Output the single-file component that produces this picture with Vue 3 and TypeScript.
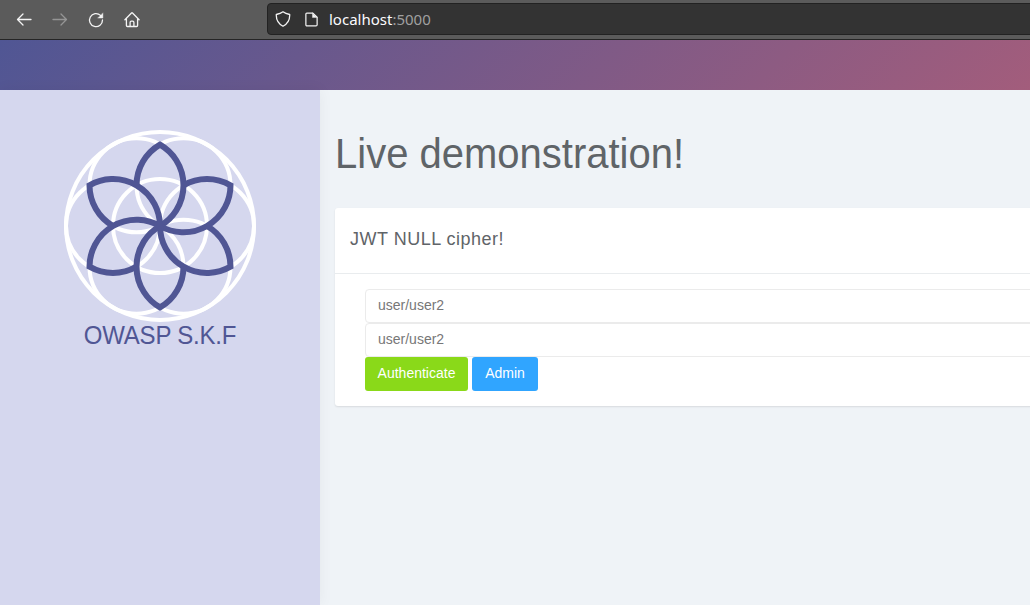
<script setup lang="ts">
import { ref } from 'vue'

const username = ref('')
const password = ref('')
const angles: number[] = [0, 60, 120, 180, 240, 300]
const ring = [
  [47, 0],
  [23.5, 40.7],
  [-23.5, 40.7],
  [-47, 0],
  [-23.5, -40.7],
  [23.5, -40.7],
]
</script>

<template>
  <div class="window">
    <header class="toolbar">
      <nav class="nav">
        <svg class="icon" viewBox="0 0 16 16"><path d="M15 7.500H1.500M7 2 1.500 7.500l5.500 5.500" /></svg>
        <svg class="icon dim" viewBox="0 0 16 16"><path d="M1 7.500h13.500M9 2l5.500 5.500-5.500 5.500" /></svg>
        <svg class="icon" viewBox="0 0 16 16">
          <path d="M12.500 3.400A6.500 6.500 0 1 0 14.500 8" />
          <path class="solid" d="M14.900 1.200v4.900H10z" />
        </svg>
        <svg class="icon home" viewBox="0 0 16 16">
          <path d="M.9 7.800 7.500 1q.5-.5 1 0l6.600 6.800M2.400 6.800v6.700q0 1 1 1h9.200q1 0 1-1V6.800M6.100 14v-3.600q0-1.300 1.300-1.300h1.200q1.300 0 1.300 1.300V14" />
        </svg>
      </nav>
      <div class="address">
        <svg class="icon" viewBox="0 0 16 16">
          <path d="M8 .8C6 2.300 3.800 3 1.300 3.500c-.2 5 1.700 9 6.700 11.700 5-2.700 6.900-6.700 6.700-11.700C12.200 3 10 2.300 8 .8z" />
        </svg>
        <svg class="icon page" viewBox="0 0 16 16">
          <path d="M3 1.200h6.500l4.500 4.300v8q0 1.300-1.200 1.300H3.200q-1.200 0-1.200-1.300V2.200q0-1 1-1z" />
          <path class="solid" d="M9 1.200v4.700h4.900z" />
        </svg>
        <span class="url">localhost<span class="port">:5000</span></span>
      </div>
    </header>
    <div class="banner"></div>
    <div class="body">
      <aside class="sidebar">
        <svg class="logo" viewBox="-96 -96 192 192">
          <g class="rings">
            <circle r="94" />
            <circle r="47" />
            <circle v-for="(c, i) in ring" :key="i" :cx="c[0]" :cy="c[1]" r="47" />
          </g>
          <g class="petals">
            <path
              v-for="a in angles"
              :key="a"
              :transform="`rotate(${a})`"
              d="M-23.500-40.700A47 47 0 0 1 0-81.400A47 47 0 0 1 0 0"
            />
          </g>
        </svg>
        <div class="brand">OWASP S.K.F</div>
      </aside>
      <main class="content">
        <h1>Live demonstration!</h1>
        <section class="card">
          <h2>JWT NULL cipher!</h2>
          <form class="form" @submit.prevent>
            <input v-model="username" type="text" placeholder="user/user2" />
            <input v-model="password" type="text" placeholder="user/user2" />
            <div class="actions">
              <button class="green" type="submit">Authenticate</button>
              <button class="blue" type="button">Admin</button>
            </div>
          </form>
        </section>
      </main>
    </div>
  </div>
</template>

<style>
body {
  overflow: hidden;
}
</style>

<style scoped>
* {
  box-sizing: border-box;
}
.window {
  display: flex;
  flex-direction: column;
  height: 605px;
  overflow: hidden;
  font-family: "Liberation Sans", Arial, sans-serif;
  color: #5f6468;
  background: #eff3f7;
}
.toolbar {
  display: flex;
  flex: none;
  height: 40px;
  background: #5b5b5b;
  border-bottom: 1px solid #252525;
}
.nav {
  display: flex;
  flex: none;
  width: 267px;
  gap: 20px;
  padding: 12px 0 0 16px;
}
.icon {
  flex: none;
  width: 16px;
  height: 16px;
  fill: none;
  stroke: #f4f4f4;
  stroke-width: 1.3;
  stroke-linecap: round;
  stroke-linejoin: round;
}
.icon .solid {
  fill: #f4f4f4;
  stroke-width: 0.4;
}
.home {
  margin-left: -0.5px;
}
.dim {
  opacity: 0.38;
}
.address {
  display: flex;
  flex: none;
  align-items: center;
  width: 780px;
  height: 32px;
  margin-top: 3px;
  padding-left: 7px;
  background: #333;
  border: 1px solid #222;
  border-radius: 4px;
}
.page {
  width: 15px;
  height: 15px;
  margin-left: 13px;
}
.url {
  margin-left: 10px;
  font: 15px/20px "Noto Sans", sans-serif;
  color: #fbfbfe;
  white-space: nowrap;
}
.port {
  color: #a0a0a0;
}
.banner {
  flex: none;
  height: 50px;
  background: linear-gradient(135deg, #505694 0%, #a55d7b 103%);
}
.body {
  display: flex;
  flex: 1;
}
.sidebar {
  display: flex;
  flex: none;
  flex-direction: column;
  align-items: center;
  width: 320px;
  padding-top: 40px;
  background: #d5d7ee;
  box-shadow: 0 0 14px rgba(0, 0, 0, 0.05);
}
.logo {
  width: 192px;
  height: 192px;
}
.rings,
.petals {
  fill: none;
  stroke: #fff;
  stroke-width: 4;
}
.petals {
  stroke: #505694;
  stroke-width: 6;
}
.brand {
  font-size: 24px;
  line-height: 28px;
  letter-spacing: -0.2px;
  color: #505694;
  transform: scaleY(1.05);
  transform-origin: 0 80%;
}
.content {
  flex: none;
  width: 760px;
  padding: 40px 0 0 15px;
}
h1 {
  margin: 1px 0 31px;
  font-size: 40px;
  font-weight: 400;
  line-height: 46px;
  transform: scaleY(1.06);
  transform-origin: 0 80%;
}
.card {
  height: 198px;
  background: #fff;
  border-radius: 3px;
  box-shadow: 0 1px 2px rgba(0, 0, 0, 0.1);
}
h2 {
  height: 66px;
  margin: 0;
  padding: 20px 15px 0;
  font-size: 18px;
  font-weight: 400;
  line-height: 22px;
  letter-spacing: 0.5px;
  border-bottom: 1px solid #e9ecee;
}
.form {
  display: flex;
  flex-direction: column;
  padding: 15px 30px 0;
}
input {
  width: 100%;
  height: 34px;
  padding: 0 12px 2px;
  font: 14px/20px "Liberation Sans", Arial, sans-serif;
  color: #555;
  background: #fff;
  border: 1px solid #ebebeb;
  border-radius: 4px;
  outline: none;
}
input::placeholder {
  color: #777;
  opacity: 1;
}
.actions {
  display: flex;
  gap: 4px;
}
button {
  width: 103px;
  height: 34px;
  padding: 0 0 2px;
  font: 14px/20px "Liberation Sans", Arial, sans-serif;
  color: #fff;
  border: 0;
  border-radius: 3px;
}
.green {
  background: #8ad919;
}
.blue {
  width: 66px;
  background: #30a5ff;
}
</style>
